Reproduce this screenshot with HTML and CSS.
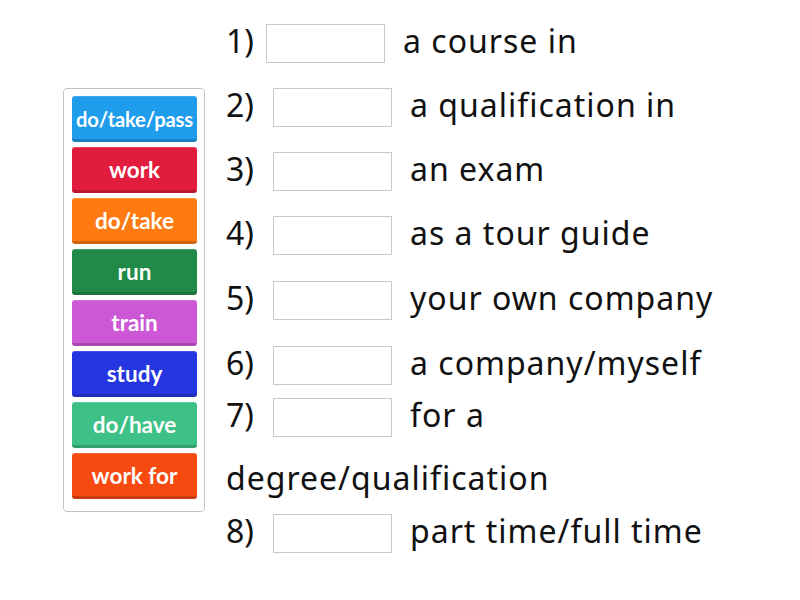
FILE: index.html
```html
<!DOCTYPE html>
<html>
<head>
<meta charset="utf-8">
<link rel="stylesheet" href="styles.css">
</head>
<body>
<div class="page">
  <div class="bank">
    <div class="tile blue">do/take/pass</div>
    <div class="tile red">work</div>
    <div class="tile orange">do/take</div>
    <div class="tile green">run</div>
    <div class="tile violet">train</div>
    <div class="tile indigo">study</div>
    <div class="tile mint">do/have</div>
    <div class="tile flame">work for</div>
  </div>
  <div class="lines">
    <div class="row r1"><span class="num">1)</span><span class="box b1"></span><span class="txt t1">a course in</span></div>
    <div class="row r2"><span class="num">2)</span><span class="box"></span><span class="txt">a qualification in</span></div>
    <div class="row r3"><span class="num">3)</span><span class="box"></span><span class="txt">an exam</span></div>
    <div class="row r4"><span class="num">4)</span><span class="box"></span><span class="txt">as a tour guide</span></div>
    <div class="row r5"><span class="num">5)</span><span class="box"></span><span class="txt">your own company</span></div>
    <div class="row r6"><span class="num">6)</span><span class="box"></span><span class="txt">a company/myself</span></div>
    <div class="row r7"><span class="num">7)</span><span class="box"></span><span class="txt">for a</span></div>
    <div class="row wrap"><span class="txt0">degree/qualification</span></div>
    <div class="row r8"><span class="num">8)</span><span class="box"></span><span class="txt">part time/full time</span></div>
  </div>
</div>
</body>
</html>
```
FILE: styles.css
```css
html, body {
  margin: 0;
  padding: 0;
  background: #ffffff;
}
body {
  width: 800px;
  height: 600px;
  overflow: hidden;
  font-family: "Noto Sans", sans-serif;
  color: #111;
}
.page {
  display: flex;
  align-items: flex-start;
}
.bank {
  margin: 88px 0 0 63px;
  width: 142px;
  height: 424px;
  box-sizing: border-box;
  border: 1px solid #c4c4c4;
  border-radius: 4px;
  padding: 7px 0 0 8px;
  display: flex;
  flex-direction: column;
  gap: 5px;
}
.tile {
  width: 125px;
  height: 46px;
  box-sizing: border-box;
  border-radius: 3px;
  color: #fff;
  font-family: "Lato", sans-serif;
  font-weight: 700;
  font-size: 22.5px;
  display: flex;
  align-items: center;
  justify-content: center;
  border-bottom: 3px solid rgba(0,0,0,0.18);
  box-shadow: inset 0 1px 0 rgba(255,255,255,0.15);
  padding-top: 2px;
  white-space: nowrap;
}
.blue { background: #1f9cec; font-size: 20.2px; letter-spacing: -0.2px; }
.red { background: #e21c3c; }
.orange { background: #ff7a10; }
.green { background: #218a48; }
.violet { background: #cc58d6; }
.indigo { background: #2536e0; }
.mint { background: #3dc187; }
.flame { background: #f74a10; }

.lines {
  margin-left: 21px;
  display: flex;
  flex-direction: column;
}
.row {
  display: flex;
  align-items: center;
  height: 40px;
  font-size: 32px;
  letter-spacing: 1px;
  line-height: 40px;
}
.num, .txt, .txt0 {
  margin-top: -4px;
}
.num {
  width: 47px;
  letter-spacing: 0;
}
.box {
  width: 119px;
  height: 39px;
  box-sizing: border-box;
  border: 1px solid #c8c8c8;
  margin-left: 0;
}
.txt {
  margin-left: 18px;
}
.b1 { margin-left: -7px; }
.r1 { margin-top: 23px; }
.r2 { margin-top: 24px; }
.r3 { margin-top: 24px; }
.r4 { margin-top: 24px; }
.r5 { margin-top: 25px; }
.r6 { margin-top: 25px; }
.r7 { margin-top: 12px; }
.wrap { margin-top: 23px; }
.r8 { margin-top: 13px; }
```
